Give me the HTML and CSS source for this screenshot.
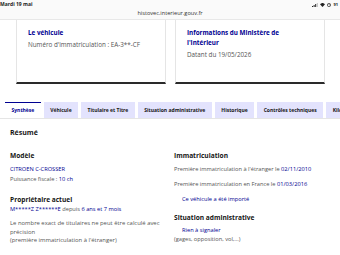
FILE: index.html
```html
<!DOCTYPE html>
<html lang="fr">
<head>
  <meta charset="UTF-8" />
  <meta name="viewport" content="width=device-width, initial-scale=1" />
  <title>HistoVec</title>
  <link rel="stylesheet" href="styles.css">
</head>
<body>
  <!-- Barre du navigateur -->
  <div class="status-bar">
    <span class="status-date">Mardi 19 mai</span>
    <span class="status-icons">
      <svg width="6" height="4" viewBox="0 0 6 4"><rect x="0" y="3" width="1" height="1" fill="#222"/><rect x="1.6" y="2" width="1" height="2" fill="#222"/><rect x="3.2" y="1" width="1" height="3" fill="#222"/><rect x="4.8" y="0" width="1" height="4" fill="#bbb"/></svg>
      <svg width="5" height="4" viewBox="0 0 10 8"><path d="M5 8 L0 2.5 A7 7 0 0 1 10 2.5 Z" fill="#222"/></svg>
      <svg width="4" height="4" viewBox="0 0 8 8"><circle cx="4" cy="4" r="3.3" fill="none" stroke="#222" stroke-width="1.3"/><path d="M4 2 V4 H5.6" stroke="#222" stroke-width="1" fill="none"/></svg>
      <span class="battery">91</span>
    </span>
    <div class="status-url">histovec.interieur.gouv.fr</div>
  </div>

  <!-- Cartes -->
  <div class="cards">
    <div class="card">
      <h3 class="card-title">Le véhicule</h3>
      <p class="card-text">Numéro d'immatriculation : EA-3**-CF</p>
    </div>
    <div class="card">
      <h3 class="card-title">Informations du Ministère de<br>l'Intérieur</h3>
      <p class="card-text">Datant du 19/05/2026</p>
    </div>
  </div>

  <!-- Onglets -->
  <div class="tabs">
    <span class="tab active">Synthèse</span>
    <span class="tab">Véhicule</span>
    <span class="tab">Titulaire et Titre</span>
    <span class="tab">Situation administrative</span>
    <span class="tab">Historique</span>
    <span class="tab">Contrôles techniques</span>
    <span class="tab">Kilométrage</span>
  </div>

  <section class="panel">
    <h2 class="panel-title">Résumé</h2>
    <div class="columns">
      <div class="col">
        <h4 class="block-title">Modèle</h4>
        <p class="blue">CITROEN C-CROSSER</p>
        <p class="muted">Puissance fiscale : <span class="blue">10 ch</span></p>

        <h4 class="block-title owner">Propriétaire actuel</h4>
        <p class="muted owner-line"><span class="blue">M*****Z Z******E</span> depuis <span class="blue">6 ans et 7 mois</span></p>
        <p class="muted note">Le nombre exact de titulaires ne peut être calculé avec<br>précision<br>(première immatriculation à l'étranger)</p>
      </div>
      <div class="col">
        <h4 class="block-title">Immatriculation</h4>
        <p class="muted line">Première immatriculation à l'étranger le <span class="blue">02/11/2010</span></p>
        <p class="muted line">Première immatriculation en France le <span class="blue">01/03/2016</span></p>
        <p class="blue indent imported">Ce véhicule a été importé</p>

        <h4 class="block-title">Situation administrative</h4>
        <p class="blue indent small-gap">Rien à signaler</p>
        <p class="muted tight">(gages, opposition, vol,...)</p>
      </div>
    </div>
  </section>
</body>
</html>
```

FILE: styles.css
```css
body {
  margin: 0;
  padding: 0;
  width: 340px;
  height: 255px;
  overflow: hidden;
  background: #fff;
  font-family: "Open Sans", "Noto Sans", sans-serif;
  color: #161616;
}

p, h2, h3, h4 {
  margin: 0;
}

.status-bar {
  position: relative;
  height: 19px;
  border-bottom: 1px solid #e8e8e8;
  background: #fafafa;
}

.status-date {
  position: absolute;
  left: 0;
  top: 1px;
  font-size: 5px;
  font-weight: 700;
  color: #222;
}

.status-icons {
  position: absolute;
  right: 2px;
  top: 2px;
  display: flex;
  align-items: center;
  gap: 2px;
}

.battery {
  font-size: 4px;
  font-weight: 700;
  color: #222;
}

.status-url {
  position: absolute;
  left: 0;
  right: 0;
  top: 9px;
  text-align: center;
  font-size: 5.6px;
  color: #333;
}

.cards {
  display: flex;
  gap: 9px;
  padding-left: 16px;
}

.card {
  box-sizing: border-box;
  width: 150px;
  height: 64px;
  padding: 8px 11px;
  border: 1px solid #e5e5e5;
  border-top: none;
  border-bottom: 2px solid #2a2a2a;
}

.card-title {
  font-size: 6.3px;
  font-weight: 700;
  line-height: 10px;
  color: #000091;
}

.card-text {
  margin-top: 2px;
  font-size: 6.3px;
  line-height: 10px;
  color: #555;
}

.tabs {
  display: flex;
  gap: 3px;
  margin-top: 18px;
  padding-left: 5px;
  white-space: nowrap;
  overflow: hidden;
  border-bottom: 1px solid #e5e5e5;
}

.tab {
  flex-shrink: 0;
  padding: 0 6.5px;
  height: 16px;
  line-height: 16px;
  font-size: 5px;
  font-weight: 700;
  background: #e3e3fd;
  color: #161616;
}

.tab.active {
  background: #fff;
  color: #000091;
  border-top: 2px solid #000091;
  height: 15px;
  line-height: 15px;
  margin-top: -1px;
}

.panel {
  padding: 9px 10px 0 10px;
}

.panel-title {
  font-size: 7px;
  font-weight: 700;
  line-height: 10px;
}

.columns {
  display: grid;
  grid-template-columns: 164px 1fr;
  margin-top: 13px;
}

.block-title {
  font-size: 6.6px;
  font-weight: 700;
  line-height: 10px;
  margin-bottom: 3px;
}

.col p {
  font-size: 5.7px;
  line-height: 10px;
  white-space: nowrap;
}

.block-title.owner {
  margin-top: 11px;
  margin-bottom: 0;
}

.col p.owner-line {
  line-height: 8px;
}

.col p.note {
  margin-top: 6px;
  line-height: 8.5px;
  font-size: 5.9px;
}

.blue {
  color: #000091;
}

.muted {
  color: #555;
}

.col p.line {
  margin-bottom: 5px;
}

.indent {
  padding-left: 8px;
}

.col p.imported {
  margin-top: 3px;
  margin-bottom: 9px;
}

.col p.small-gap {
  margin-top: 1px;
  line-height: 9px;
}

.col p.tight {
  line-height: 9px;
}
```
